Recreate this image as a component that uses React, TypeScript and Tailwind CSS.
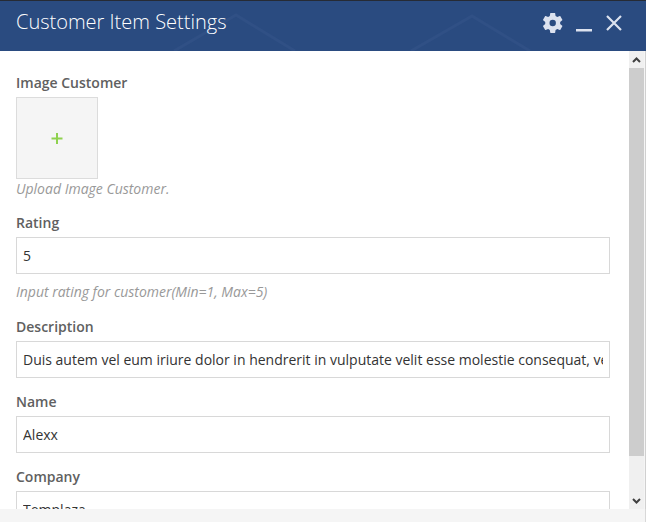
import React from "react";

type TextFieldProps = {
  label: string;
  value: string;
  hint?: string;
  className?: string;
};

function Label({ children }: { children: React.ReactNode }) {
  return <div className="mb-1 text-sm leading-5 font-semibold text-[#606060]">{children}</div>;
}

function TextField({ label, value, hint, className }: TextFieldProps) {
  return (
    <div className={className}>
      <Label>{label}</Label>
      <div className="h-[37px] border border-[#d8d8d8] bg-white px-1.5">
        <div className="overflow-hidden text-sm leading-[35px] whitespace-nowrap text-[#333]">{value}</div>
      </div>
      {hint && <p className="mt-2 text-sm leading-5 tracking-[-0.02px] text-[#999] italic">{hint}</p>}
    </div>
  );
}

function Header() {
  return (
    <header className="relative flex h-[51px] shrink-0 justify-between border-t border-[#262b35] bg-[#2a4b80] pr-[23px] pl-4">
      <svg className="absolute inset-0" width="646" height="50" fill="none" stroke="#305085" strokeWidth="3">
        <path d="M174 50L236 14L295 50M411 50L472 15L530 50" />
      </svg>
      <h1 className="relative text-xl leading-[41px] font-light text-white">Customer Item Settings</h1>
      <div className="relative mt-[11px] flex h-[22px] items-center text-[#dce2ef]">
        <svg width="24" height="24" viewBox="-0.7 0 24 24" fill="currentColor">
          <path d="M19.43 12.98c.04-.32.07-.64.07-.98s-.03-.66-.07-.98l2.11-1.65c.19-.15.24-.42.12-.64l-2-3.46c-.12-.22-.39-.3-.61-.22l-2.49 1c-.52-.4-1.08-.73-1.69-.98l-.38-2.65C14.46 2.18 14.25 2 14 2h-4c-.25 0-.46.18-.49.42l-.38 2.65c-.61.25-1.17.59-1.69.98l-2.49-1c-.23-.09-.49 0-.61.22l-2 3.46c-.13.22-.07.49.12.64l2.11 1.65c-.04.32-.07.65-.07.98s.03.66.07.98l-2.11 1.65c-.19.15-.24.42-.12.64l2 3.46c.12.22.39.3.61.22l2.49-1c.52.4 1.08.73 1.69.98l.38 2.65c.03.24.24.42.49.42h4c.25 0 .46-.18.49-.42l.38-2.65c.61-.25 1.17-.59 1.69-.98l2.49 1c.23.09.49 0 .61-.22l2-3.46c.12-.22.07-.49-.12-.64l-2.11-1.65zM12 15.2a3.2 3.2 0 1 1 0-6.4 3.2 3.2 0 0 1 0 6.4z" />
        </svg>
        <svg className="ml-3" width="16" height="22" viewBox="0 0 16 22" fill="currentColor">
          <path d="M0 17h16v2.5H0z" />
        </svg>
        <svg className="ml-3.5" width="17" height="22" viewBox="0.5 0 17 22" fill="none" stroke="currentColor" strokeWidth="2.2">
          <path d="M1.5 4L15.5 18M15.5 4L1.5 18" />
        </svg>
      </div>
    </header>
  );
}

function Scrollbar() {
  return (
    <div className="flex w-[15px] shrink-0 flex-col bg-[#f0f0f0]">
      <svg width="15" height="17" viewBox="0 0 15 17" fill="none" stroke="#404040" strokeWidth="2">
        <path d="M4 11L7.5 7.5L11 11" />
      </svg>
      <div className="h-[388px] bg-[#cdcdcd]" />
      <svg className="mt-auto" width="15" height="17" viewBox="0 0 15 17" fill="none" stroke="#404040" strokeWidth="2">
        <path d="M4 7L7.5 10.5L11 7" />
      </svg>
    </div>
  );
}

export default function App() {
  return (
    <div className="flex h-[522px] w-[646px] flex-col overflow-hidden bg-[#f5f5f5] font-['Open_Sans',sans-serif]">
      <Header />
      <main className="flex h-[458px] shrink-0 overflow-hidden bg-white">
        <div className="min-w-0 flex-1 pt-[22px] pr-[19px] pl-4">
          <Label>Image Customer</Label>
          <div className="flex size-[82px] items-center justify-center border border-[#dcdcdc] bg-[#f5f5f5]">
            <svg width="12" height="12" viewBox="0 0 12 12" fill="none" stroke="#8fd14f" strokeWidth="2">
              <path d="M6 1V12M.5 6.5H11.5" />
            </svg>
          </div>
          <p className="text-sm leading-5 text-[#999] italic">Upload Image Customer.</p>
          <TextField className="mt-3.5" label="Rating" value="5" hint="Input rating for customer(Min=1, Max=5)" />
          <TextField
            className="mt-[15px]"
            label="Description"
            value="Duis autem vel eum iriure dolor in hendrerit in vulputate velit esse molestie consequat, vel illum dolore eu feugiat"
          />
          <TextField className="mt-3.5" label="Name" value="Alexx" />
          <TextField className="mt-3.5" label="Company" value="Templaza" />
        </div>
        <Scrollbar />
        <div className="w-0.5 shrink-0 border-r border-[#d0d0d0] bg-[#f5f5f5]" />
      </main>
      <footer className="flex-1 border-r border-[#d8d8d8]" />
    </div>
  );
}
